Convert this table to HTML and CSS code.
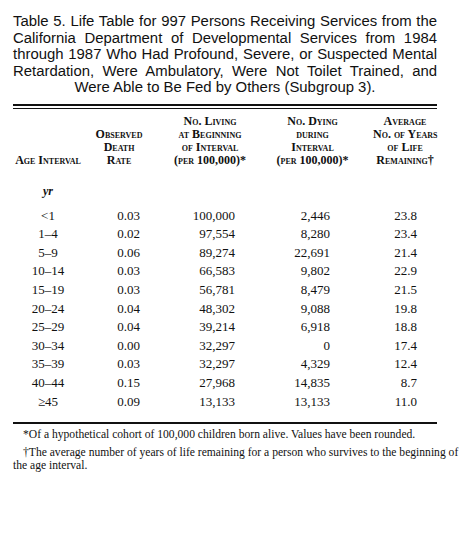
FILE: index.html
```html
<!DOCTYPE html>
<html>
<head>
<meta charset="utf-8">
<link rel="stylesheet" href="styles.css">
</head>
<body>
<div class="page">
  <div class="title">
    <span class="tl">Table 5. Life Table for 997 Persons Receiving Services from the</span>
    <span class="tl">California Department of Developmental Services from 1984</span>
    <span class="tl">through 1987 Who Had Profound, Severe, or Suspected Mental</span>
    <span class="tl">Retardation, Were Ambulatory, Were Not Toilet Trained, and</span>
    <span class="tl last">Were Able to Be Fed by Others (Subgroup 3).</span>
  </div>
  <div class="rule-double"></div>
  <table class="life">
    <colgroup>
      <col class="c1"><col class="c2"><col class="c3"><col class="c4"><col class="c5">
    </colgroup>
    <thead>
      <tr class="hrow">
        <th>Age Interval</th>
        <th>Observed<br>Death<br>Rate</th>
        <th>No. Living<br>at Beginning<br>of Interval<br>(per 100,000)*</th>
        <th>No. Dying<br>during<br>Interval<br>(per 100,000)*</th>
        <th class="h5">Average<br>No. of Years<br>of Life<br>Remaining†</th>
      </tr>
    </thead>
    <tbody>
      <tr class="unit"><td><i>yr</i></td><td></td><td></td><td></td><td></td></tr>
      <tr class="first"><td>&lt;1</td><td>0.03</td><td>100,000</td><td>2,446</td><td>23.8</td></tr>
      <tr><td>1–4</td><td>0.02</td><td>97,554</td><td>8,280</td><td>23.4</td></tr>
      <tr><td>5–9</td><td>0.06</td><td>89,274</td><td>22,691</td><td>21.4</td></tr>
      <tr><td>10–14</td><td>0.03</td><td>66,583</td><td>9,802</td><td>22.9</td></tr>
      <tr><td>15–19</td><td>0.03</td><td>56,781</td><td>8,479</td><td>21.5</td></tr>
      <tr><td>20–24</td><td>0.04</td><td>48,302</td><td>9,088</td><td>19.8</td></tr>
      <tr><td>25–29</td><td>0.04</td><td>39,214</td><td>6,918</td><td>18.8</td></tr>
      <tr><td>30–34</td><td>0.00</td><td>32,297</td><td>0</td><td>17.4</td></tr>
      <tr><td>35–39</td><td>0.03</td><td>32,297</td><td>4,329</td><td>12.4</td></tr>
      <tr><td>40–44</td><td>0.15</td><td>27,968</td><td>14,835</td><td>8.7</td></tr>
      <tr><td>≥45</td><td>0.09</td><td>13,133</td><td>13,133</td><td>11.0</td></tr>
    </tbody>
  </table>
  <div class="rule-bottom"></div>
  <div class="notes">
    <p class="note">*Of a hypothetical cohort of 100,000 children born alive. Values have been rounded.</p>
    <p class="note"><span class="jl">†The average number of years of life remaining for a person who survives to the beginning of</span><span class="cont">the age interval.</span></p>
  </div>
</div>
</body>
</html>
```
FILE: styles.css
```css
html, body {
  margin: 0;
  padding: 0;
  background: #fff;
}
.page {
  width: 424px;
  margin-left: 13px;
  color: #111;
}
.title {
  margin-top: 13px;
  font-family: "Liberation Sans", Arial, sans-serif;
  font-size: 14.9px;
  line-height: 16.6px;
}
.tl {
  display: block;
  text-align: justify;
  text-align-last: justify;
  white-space: nowrap;
}
.tl.last {
  text-align: center;
  text-align-last: center;
}
.rule-double {
  margin-top: 8px;
  height: 2px;
  border-top: 2px solid #111;
  border-bottom: 1px solid #111;
}
.life {
  width: 424px;
  border-collapse: collapse;
  table-layout: fixed;
  font-family: "Liberation Serif", "Times New Roman", serif;
}
.c1 { width: 70px; }
.c2 { width: 72px; }
.c3 { width: 110px; }
.c4 { width: 95px; }
.c5 { width: 77px; }
.life th {
  font-weight: bold;
  font-variant: small-caps;
  font-size: 12px;
  line-height: 13px;
  vertical-align: bottom;
  text-align: center;
  padding: 6px 0 0 0;
  white-space: nowrap;
}
.life th.h5 {
  padding-left: 13px;
}
.life td {
  font-size: 13px;
  line-height: 18.6px;
  padding: 0;
  text-align: right;
  white-space: nowrap;
}
.life td:nth-child(1) { text-align: center; }
.life td:nth-child(2) { padding-right: 15px; }
.life td:nth-child(3) { padding-right: 30px; }
.life td:nth-child(4) { padding-right: 30px; }
.life td:nth-child(5) { padding-right: 20px; }
.life tr.unit td {
  padding-top: 15px;
  font-size: 12px;
  font-weight: bold;
}
.life tr.first td {
  padding-top: 6px;
}
.rule-bottom {
  margin-top: 11px;
  border-top: 2px solid #111;
}
.notes {
  margin-top: 4px;
  font-family: "Liberation Serif", "Times New Roman", serif;
  font-size: 11.6px;
  line-height: 13px;
}
.note {
  margin: 0 0 5px 0;
  text-indent: 10px;
}
.jl {
  display: block;
  text-align: justify;
  text-align-last: justify;
  white-space: nowrap;
}
.cont {
  display: block;
  text-indent: 0;
}
```
